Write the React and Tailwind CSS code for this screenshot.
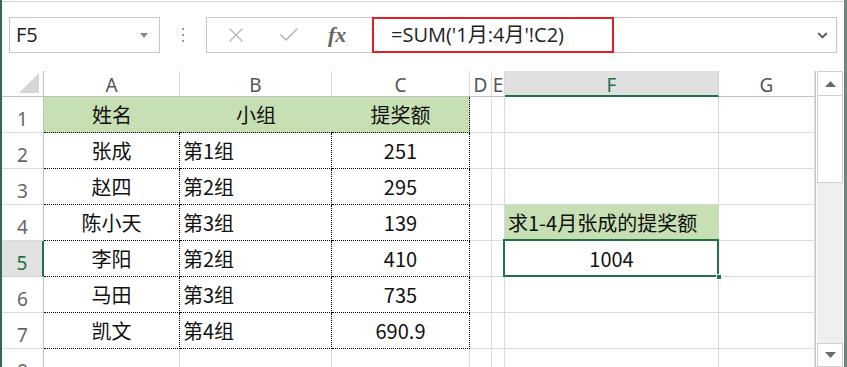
import { X, Check, ChevronDown } from "lucide-react";

const cn = '"Noto Sans CJK SC", "Noto Sans", sans-serif';

const data = [
	["张成", "第1组", "251"],
	["赵四", "第2组", "295"],
	["陈小天", "第3组", "139"],
	["李阳", "第2组", "410"],
	["马田", "第3组", "735"],
	["凯文", "第4组", "690.9"],
];

function RowHead({ n, selected }) {
	return (
		<div
			className={
				selected
					? "flex items-end justify-center pb-[3px] bg-[#e1e1e1] border-b border-b-[#d4d4d4] border-r-2 border-r-[#217346] text-[#217346]"
					: "flex items-end justify-center pb-[3px] border-b border-b-[#d9d9d9] border-r border-r-[#c0c0c0] text-[#666]"
			}
			style={{ fontFamily: '"Noto Sans", sans-serif' }}
		>
			<span className="text-[19px] leading-none">{n}</span>
		</div>
	);
}

function Blank() {
	return <div className="border-r border-b border-[#dadada]" />;
}

function TopBar() {
	return (
		<div className="h-[70px] shrink-0 border-t border-[#d4d4d4] mt-px pt-[15px]">
			<div className="flex items-center h-9">
				<div className="ml-[7px] w-[151px] h-9 border border-[#c6c6c6] flex items-center justify-between pl-[6px] pr-[11px]">
					<span className="text-[20px] text-[#222]" style={{ fontFamily: '"Open Sans", sans-serif' }}>
						F5
					</span>
					<svg width="8" height="5" viewBox="0 0 8 5">
						<path d="M0 0h8L4 5z" fill="#888" />
					</svg>
				</div>
				<div className="w-[46px] flex flex-col items-center gap-[4px]">
					<div className="w-[2px] h-[2px] bg-[#9a9a9a]" />
					<div className="w-[2px] h-[2px] bg-[#9a9a9a]" />
					<div className="w-[2px] h-[2px] bg-[#9a9a9a]" />
				</div>
				<div className="w-[631px] h-9 border border-[#c6c6c6] flex items-center">
					<div className="w-[165px] h-full flex items-center">
						<X className="ml-[17px]" size={24} strokeWidth={1.3} color="#b4b4b4" />
						<Check className="ml-[29px]" size={24} strokeWidth={1.6} color="#b4b4b4" />
						<span
							className="ml-[27px] text-[22px] italic font-semibold text-[#666] leading-none"
							style={{ fontFamily: '"Liberation Serif", serif' }}
						>
							fx
						</span>
					</div>
					<div
						className="w-[242px] h-9 -my-px border-2 border-[#e01f26] flex items-center pl-[17px] text-[20px] text-[#222]"
						style={{ fontFamily: '"Open Sans", "Noto Sans CJK SC", sans-serif' }}
					>
						=SUM('1月:4月'!C2)
					</div>
					<div className="flex-1 flex justify-end pr-[6px]">
						<ChevronDown size={15} strokeWidth={3.2} color="#555" />
					</div>
				</div>
			</div>
		</div>
	);
}

export default function App() {
	const letters = ["A", "B", "C", "D", "E", "F", "G"];
	return (
		<div className="w-[847px] h-[367px] overflow-hidden bg-white flex flex-col border-l-2 border-l-[#35694f] border-r-[3px] border-r-[#6f8578]">
			<TopBar />
			<div className="flex flex-1 min-h-0">
				<div
					className="grid w-[813px] shrink-0 grid-cols-[42px_136px_152px_138px_22px_13px_214px_96px] grid-rows-[26px_repeat(8,36px)] text-[20px] text-[#111]"
					style={{ fontFamily: cn }}
				>
					{/* column headers */}
					<div className="relative border-r border-b border-[#c0c0c0]">
						<svg className="absolute right-[4px] bottom-[3px]" width="20" height="20" viewBox="0 0 20 20">
							<path d="M20 0V20H0z" fill="#d6d6d6" />
						</svg>
					</div>
					{letters.map((l) =>
						l === "F" ? (
							<div
								key={l}
								className="flex items-center justify-center pt-[4px] bg-[#e0e0e0] border-b-2 border-b-[#217346] border-r border-r-[#d0d0d0] text-[#217346] text-[19px]"
								style={{ fontFamily: '"Noto Sans", sans-serif' }}
							>
								{l}
							</div>
						) : (
							<div
								key={l}
								className="flex items-center justify-center pt-[4px] border-b border-b-[#c0c0c0] border-r border-r-[#dadada] text-[#555] text-[19px] overflow-hidden"
								style={{ fontFamily: '"Noto Sans", sans-serif' }}
							>
								{l}
							</div>
						)
					)}

					{/* row 1 */}
					<RowHead n="1" />
					<div className="flex items-center justify-center bg-[#c6e0b4] border-b border-dotted border-b-black">姓名</div>
					<div className="flex items-center justify-center bg-[#c6e0b4] border-b border-dotted border-b-black">小组</div>
					<div className="flex items-center justify-center bg-[#c6e0b4] border-b border-r border-dotted border-black">提奖额</div>
					<Blank />
					<Blank />
					<Blank />
					<Blank />

					{data.map((r, i) => {
						const n = i + 2;
						return [
							<RowHead key={"h" + n} n={String(n)} selected={n === 5} />,
							<div key={"a" + n} className="flex items-center justify-center border-r border-b border-dotted border-black">
								{r[0]}
							</div>,
							<div key={"b" + n} className="flex items-center pl-[3px] border-r border-b border-dotted border-black">
								{r[1]}
							</div>,
							<div key={"c" + n} className="flex items-center justify-center border-r border-b border-dotted border-black">
								{r[2]}
							</div>,
							<Blank key={"d" + n} />,
							<Blank key={"e" + n} />,
							n === 4 ? (
								<div key={"f" + n} className="flex items-center pl-[3px] bg-[#c6e0b4] border-b border-[#dadada] whitespace-nowrap">
									求1-4月张成的提奖额
								</div>
							) : n === 5 ? (
								<div key={"f" + n} className="relative flex items-center justify-center border-r border-b border-[#dadada]">
									1004
									<div className="absolute -left-[2px] -top-[2px] -right-px -bottom-px border-2 border-[#217346]" />
									<div className="absolute -right-[4px] -bottom-[4px] w-[6px] h-[6px] bg-[#217346] border border-white" />
								</div>
							) : (
								<Blank key={"f" + n} />
							),
							<Blank key={"g" + n} />,
						];
					})}

					{/* row 8 */}
					<RowHead n="8" />
					<Blank />
					<Blank />
					<Blank />
					<Blank />
					<Blank />
					<Blank />
					<Blank />
				</div>
				<div className="flex-1 flex flex-col border-l border-[#c8c8c8] pl-[1px] pr-[1px]">
					<div className="h-[25px] border border-[#d0d0d0] bg-white flex items-center justify-center">
						<svg width="11" height="6" viewBox="0 0 11 6">
							<path d="M0 6L5.5 0L11 6z" fill="#6a6a6a" />
						</svg>
					</div>
					<div className="h-[87px] border border-t-0 border-[#d0d0d0] bg-white" />
					<div className="flex-1 bg-[#efefef]" />
					<div className="h-[24px] border border-[#d0d0d0] bg-white flex items-center justify-center">
						<svg width="11" height="6" viewBox="0 0 11 6">
							<path d="M0 0L5.5 6L11 0z" fill="#6a6a6a" />
						</svg>
					</div>
				</div>
			</div>
		</div>
	);
}
